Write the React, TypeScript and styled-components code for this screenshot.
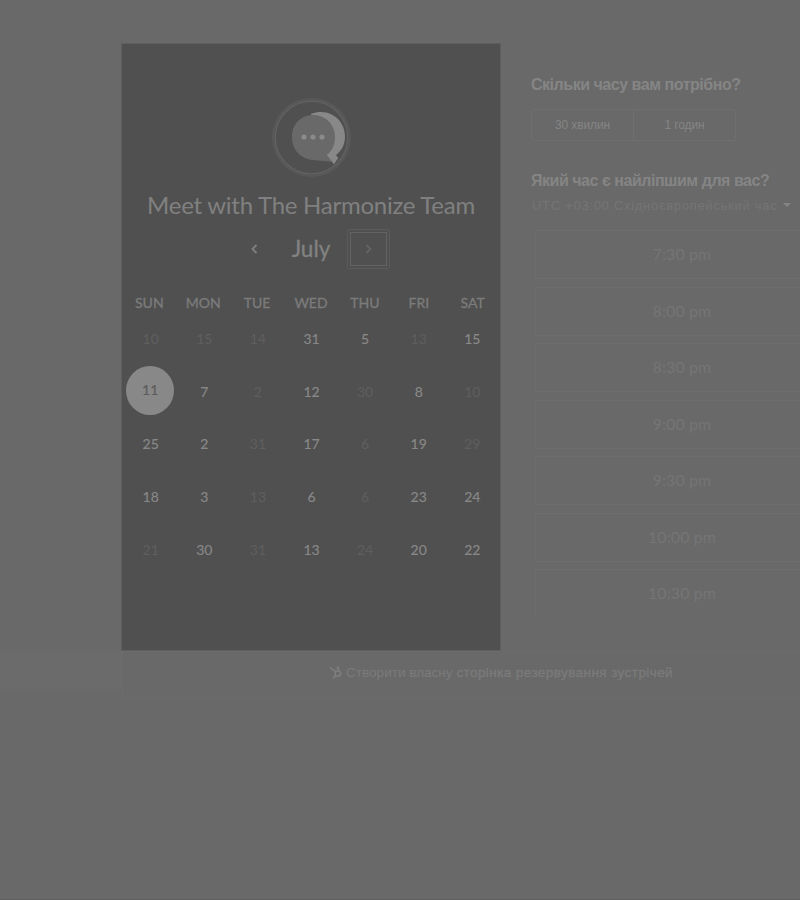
import React from 'react';
import styled, { createGlobalStyle } from 'styled-components';

const GlobalStyle = createGlobalStyle`
  * { box-sizing: border-box; }
  html, body { margin: 0; background: #696969; }
  button { font: inherit; color: inherit; background: none; border: 0; padding: 0; }
`;

const Page = styled.div`
  width: 800px;
  height: 900px;
  overflow: hidden;
  padding-top: 44px;
  background: #696969;
  border-bottom: 1px solid #62605f;
  font-family: 'Liberation Sans', Arial, sans-serif;
`;

const Columns = styled.div`
  display: flex;
  height: 607px;
`;

const Gutter = styled.div`
  width: 122px;
  flex: none;
`;

const CalendarPanel = styled.section`
  width: 378px;
  flex: none;
  height: 606px;
  background: #505050;
  box-shadow: 0 0 0 1px #5e5e5e;
  display: flex;
  flex-direction: column;
  align-items: center;
  padding-top: 51px;
  font-family: Lato, sans-serif;
  color: #808080;
`;

const Logo = styled.svg`
  width: 84px;
  height: 84px;
  flex: none;
`;

const Title = styled.h1`
  margin: 11px 0 0;
  height: 30px;
  font-size: 24px;
  line-height: 30px;
  font-weight: 400;
  letter-spacing: -0.26px;
  white-space: nowrap;
`;

const MonthBar = styled.div`
  display: grid;
  grid-template-columns: 42px 72px 42px;
  align-items: center;
  height: 42px;
  margin-top: 8px;
`;

const Month = styled.span`
  font-size: 22.5px;
  line-height: 40px;
  text-align: center;
  color: #828282;
  -webkit-text-stroke: 0.3px #828282;
`;

const ArrowButton = styled.button<{ $focused?: boolean }>`
  display: flex;
  align-items: center;
  justify-content: center;
  width: ${p => (p.$focused ? 43 : 38)}px;
  height: 40px;
  padding-left: ${p => (p.$focused ? 0 : 4)}px;
  color: ${p => (p.$focused ? '#646464' : '#808080')};
  border: 1px solid ${p => (p.$focused ? '#5b5b5b' : 'transparent')};
  outline: ${p => (p.$focused ? '1px solid #636363' : 'none')};
  outline-offset: -4px;
  border-radius: 2px;
`;

const Weekdays = styled.div`
  display: grid;
  grid-template-columns: repeat(7, 53.9px);
  height: 20px;
  margin-top: 23px;
  font-size: 14px;
  line-height: 20px;
  text-align: center;
  color: #7c7c7c;
  -webkit-text-stroke: 0.3px #7c7c7c;
`;

const Days = styled.div`
  display: grid;
  grid-template-columns: repeat(7, 53.6px);
  grid-auto-rows: 52.7px;
  margin: -1px 0 0 1px;
`;

const Day = styled.div<{ $dim?: boolean }>`
  display: flex;
  align-items: center;
  justify-content: center;
  font-size: 14px;
  color: ${p => (p.$dim ? '#5f5f5f' : '#888888')};
  -webkit-text-stroke: ${p => (p.$dim ? '0' : '0.15px #888888')};
`;

const SelectedDay = styled.span`
  display: flex;
  align-items: center;
  justify-content: center;
  width: 48px;
  height: 49px;
  flex: none;
  margin: -1px 0 0 -1px;
  padding-bottom: 2px;
  border-radius: 50%;
  background: #888888;
  color: #5c5c5c;
  -webkit-text-stroke: 0.2px #5c5c5c;
`;

const Options = styled.section`
  flex: none;
  width: 330px;
  padding: 31px 0 0 31px;
`;

const Question = styled.h2`
  margin: 0;
  height: 20px;
  font-size: 16px;
  line-height: 20px;
  letter-spacing: -0.47px;
  color: #858585;
  white-space: nowrap;
`;

const Durations = styled.div`
  display: grid;
  grid-template-columns: 101px 102px;
  width: 205px;
  height: 32px;
  margin: 14px 0 30px;
  border: 1px solid #6f6f6f;
  border-radius: 3px;
`;

const Duration = styled.button`
  font-size: 12px;
  letter-spacing: -0.1px;
  color: #858585;
  & + & { border-left: 1px solid #6f6f6f; }
`;

const Zone = styled.div`
  display: flex;
  align-items: center;
  height: 20px;
  margin-top: 4px;
  padding-left: 1px;
  font-size: 13px;
  letter-spacing: 0.71px;
  color: #757575;
  white-space: nowrap;
`;

const Caret = styled.span`
  margin-left: 6px;
  border: 4px solid transparent;
  border-top-color: #858585;
  border-bottom: 0;
`;

const Slots = styled.div`
  height: 384px;
  overflow: hidden;
  margin-top: 15px;
  padding-left: 4px;
`;

const Slot = styled.button`
  display: block;
  width: 294px;
  height: 49px;
  margin-bottom: 7.55px;
  padding-bottom: 2px;
  border: 1px solid #6d6d6d;
  border-radius: 2px;
  font: 400 16px Lato, sans-serif;
  letter-spacing: 0.1px;
  color: #757575;
`;

const FooterRow = styled.div`
  display: flex;
  height: 47px;
`;

const FooterEdge = styled.div`
  width: 122px;
  height: 40px;
  flex: none;
  background: #6b6b6b;
`;

const Footer = styled.footer`
  display: flex;
  flex: 1;
  padding-left: 206px;
  align-items: center;
  border: solid #6c6c6c;
  border-width: 1px 0 1px 1px;
  color: #7b7b7b;
  font-size: 13.6px;
  white-space: nowrap;
`;

const FooterText = styled.span`
  margin-left: 4px;
  padding-bottom: 4px;
  letter-spacing: -0.02px;
`;

const FooterStrong = styled.span`
  letter-spacing: 0.37px;
  -webkit-text-stroke: 0.3px #7b7b7b;
`;

const Sprocket = styled.svg`
  width: 13px;
  height: 14px;
  margin-bottom: 4px;
`;

const weekdays = ['SUN', 'MON', 'TUE', 'WED', 'THU', 'FRI', 'SAT'];

type Cell = [label: number, state?: 'dim' | 'selected'];
const days: Cell[] = [
  [10, 'dim'], [15, 'dim'], [14, 'dim'], [31], [5], [13, 'dim'], [15],
  [11, 'selected'], [7], [2, 'dim'], [12], [30, 'dim'], [8], [10, 'dim'],
  [25], [2], [31, 'dim'], [17], [6, 'dim'], [19], [29, 'dim'],
  [18], [3], [13, 'dim'], [6], [6, 'dim'], [23], [24],
  [21, 'dim'], [30], [31, 'dim'], [13], [24, 'dim'], [20], [22],
];

const slots = ['7:30 pm', '8:00 pm', '8:30 pm', '9:00 pm', '9:30 pm', '10:00 pm', '10:30 pm'];

const Chevron = ({ flip = false }: { flip?: boolean }) => (
  <svg width="7" height="10" viewBox="0 0 7 10" fill="none" stroke="currentColor" strokeWidth="1.8">
    <path d={flip ? 'M1.5 1L5.5 5L1.5 9' : 'M5.5 1L1.5 5L5.5 9'} />
  </svg>
);

export default function App() {
  return (
    <Page>
      <GlobalStyle />
      <Columns>
        <Gutter />
        <CalendarPanel>
          <Logo viewBox="0 0 84 84">
            <circle cx="42.5" cy="42.5" r="38.3" fill="none" stroke="#585858" strokeWidth="2.4" />
            <circle cx="42.5" cy="42.5" r="36.3" fill="none" stroke="#636363" strokeWidth="1.3" />
            <path d="M42 19C60 12 76 25 76 41C76 51 72 56 67 60L69 63L65 69L57 59Z" fill="#888888" />
            <path d="M44 20C31 20 23 30 23 42C23 55 32 64 44 65L64 67L58 60C64 55 66 49 66 42C66 30 57 20 44 20Z" fill="#696969" />
            <path d="M58 60L61 58L69 63L65 69Z" fill="#888888" />
            <g fill="#8b8b8b">
              <circle cx="35" cy="42" r="2.6" />
              <circle cx="44" cy="42" r="2.6" />
              <circle cx="53" cy="42" r="2.6" />
            </g>
          </Logo>
          <Title>Meet with The Harmonize Team</Title>
          <MonthBar>
            <ArrowButton aria-label="Previous month"><Chevron /></ArrowButton>
            <Month>July</Month>
            <ArrowButton $focused aria-label="Next month"><Chevron flip /></ArrowButton>
          </MonthBar>
          <Weekdays>{weekdays.map(d => <span key={d}>{d}</span>)}</Weekdays>
          <Days>
            {days.map(([label, state], i) => (
              <Day key={i} $dim={state === 'dim'}>
                {state === 'selected' ? <SelectedDay>{label}</SelectedDay> : label}
              </Day>
            ))}
          </Days>
        </CalendarPanel>
        <Options>
          <Question>Скільки часу вам потрібно?</Question>
          <Durations>
            <Duration>30 хвилин</Duration>
            <Duration>1 годин</Duration>
          </Durations>
          <Question>Який час є найліпшим для вас?</Question>
          <Zone>UTC +03:00 Східноєвропейський час<Caret /></Zone>
          <Slots>{slots.map(s => <Slot key={s}>{s}</Slot>)}</Slots>
        </Options>
      </Columns>
      <FooterRow>
        <FooterEdge />
        <Footer>
          <Sprocket viewBox="0 0 13 14" fill="none" stroke="#7f7f7f" strokeWidth="1.5">
            <path d="M1 1.5L6.5 5.5M9 5V1.5M6.5 9.5L4 12.5" />
            <circle cx="8.8" cy="7.5" r="2.8" />
            <circle cx="9" cy="1.8" r="0.6" />
          </Sprocket>
          <FooterText>Створити власну <FooterStrong>сторінка резервування зустрічей</FooterStrong></FooterText>
        </Footer>
      </FooterRow>
    </Page>
  );
}
